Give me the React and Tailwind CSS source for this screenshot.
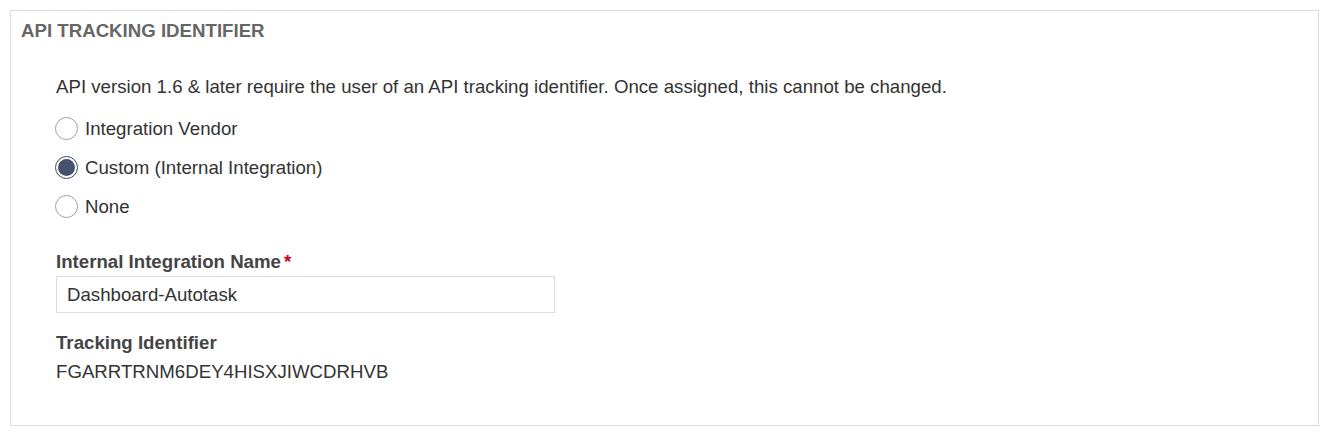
import { useState } from 'react'

const options = [
  { id: 'vendor', label: 'Integration Vendor' },
  { id: 'custom', label: 'Custom (Internal Integration)' },
  { id: 'none', label: 'None' },
]

function Radio({ checked, label, onSelect }) {
  return (
    <label className="flex items-center gap-[7px] h-[39px] cursor-pointer" onClick={onSelect}>
      <span
        className={`-ml-px w-[23px] h-[23px] rounded-full border flex items-center justify-center bg-white ${
          checked ? 'border-[#3b4862]' : 'border-[#9aa0ac]'
        }`}
      >
        {checked && <span className="w-[17px] h-[17px] rounded-full bg-[#46526d]" />}
      </span>
      <span className="text-[18.67px] text-[#333] leading-[22px]">{label}</span>
    </label>
  )
}

export default function App() {
  const [choice, setChoice] = useState('custom')
  const [name, setName] = useState('Dashboard-Autotask')

  return (
    <div className="p-[10px] bg-white" style={{ fontFamily: '"Liberation Sans", Arial, sans-serif' }}>
      <div className="border border-[#dcdcdc] h-[416px]">
        <h2 className="px-[10px] pt-[9px] text-[18.67px] font-bold text-[#666] leading-[22px]">
          API TRACKING IDENTIFIER
        </h2>

        <div className="pl-[45px] pt-[34px]">
          <p className="text-[18.67px] text-[#333] leading-[22px]">
            API version 1.6 &amp; later require the user of an API tracking identifier. Once assigned, this cannot be changed.
          </p>

          <div className="mt-[11px] flex flex-col">
            {options.map((o) => (
              <Radio key={o.id} label={o.label} checked={choice === o.id} onSelect={() => setChoice(o.id)} />
            ))}
          </div>

          <div className="mt-[25px]">
            <div className="text-[18.67px] font-bold text-[#444] leading-[22px]">
              Internal Integration Name<span className="text-[#d0021b] ml-[3px]">*</span>
            </div>
            <input
              value={name}
              onChange={(e) => setName(e.target.value)}
              className="mt-[3px] w-[499px] h-[37px] border border-[#dcdcdc] px-[10px] text-[18.67px] text-[#333] outline-none"
            />
          </div>

          <div className="mt-[19px]">
            <div className="text-[18.67px] font-bold text-[#444] leading-[22px]">Tracking Identifier</div>
            <div className="mt-[7px] text-[18.67px] text-[#333] leading-[22px]">FGARRTRNM6DEY4HISXJIWCDRHVB</div>
          </div>
        </div>
      </div>
    </div>
  )
}
